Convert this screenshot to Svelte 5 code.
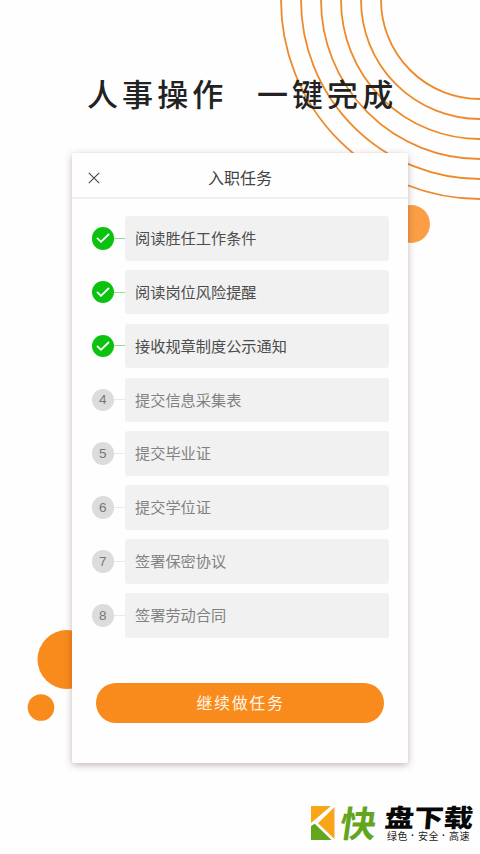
<script>
  const rings = [99, 119, 139, 159, 179, 199];
  const tasks = [
    { label: '阅读胜任工作条件', done: true },
    { label: '阅读岗位风险提醒', done: true },
    { label: '接收规章制度公示通知', done: true },
    { label: '提交信息采集表', done: false },
    { label: '提交毕业证', done: false },
    { label: '提交学位证', done: false },
    { label: '签署保密协议', done: false },
    { label: '签署劳动合同', done: false }
  ];
</script>

<main>
  <svg class="backdrop" width="480" height="854" viewBox="0 0 480 854" aria-hidden="true">
    {#each rings as r}
      <circle cx="480" cy="0" {r} fill="none" stroke="#ee8a2b" stroke-width="1.8" />
    {/each}
    <circle cx="411" cy="224" r="19" fill="#fb9e45" />
    <circle cx="67" cy="659.5" r="29.5" fill="#f98b1c" />
    <circle cx="41" cy="707.5" r="13.3" fill="#f98b1c" />
  </svg>

  <h1><span>人事操作</span><span>一键完成</span></h1>

  <section class="card">
    <header>
      <svg class="close" width="12" height="12" viewBox="0 0 12 12" aria-label="关闭">
        <path d="M.8 .8L11.2 11.2M11.2 .8L.8 11.2" stroke="#444" stroke-width="1.1" fill="none" />
      </svg>
      <h2>入职任务</h2>
    </header>

    <ol>
      {#each tasks as task, i}
        <li class:done={task.done}>
          <span class="badge">
            {#if task.done}
              <svg width="14" height="12" viewBox="0 0 14 12"><path d="M1 5.9L5 9.8L13 2" fill="none" stroke="#fff" stroke-width="1.8" /></svg>
            {:else}{i + 1}{/if}
          </span>
          <span class="link"></span>
          <span class="label">{task.label}</span>
        </li>
      {/each}
    </ol>

    <button>继续做任务</button>
  </section>

  <footer>
    <svg width="24" height="35" viewBox="0 0 24 35" aria-hidden="true">
      <path d="M0 0H20L0 17Z" fill="#f9a51a" />
      <path d="M23.5 1V33L7 17.2Z" fill="#f9a51a" />
      <path d="M0 20L3.8 17.8L20.5 34H0Z" fill="#63a51d" />
    </svg>
    <span class="fast">快</span>
    <div class="brand">
      <strong>盘下载</strong>
      <small><span>绿色</span><i>·</i><span>安全</span><i>·</i><span>高速</span></small>
    </div>
  </footer>
</main>

<style>
  :global(body) { background: #fefefe; }
  main {
    position: relative;
    box-sizing: border-box;
    width: 480px;
    height: 854px;
    overflow: hidden;
    display: flex;
    flex-direction: column;
    background: #fefefe;
    font-family: "Noto Sans CJK SC", sans-serif;
  }
  .backdrop { position: absolute; inset: 0; }
  h1 {
    position: relative;
    height: 47px;
    margin: 69px 0 37px 87px;
    display: flex;
    gap: 29.5px;
    font-size: 31px;
    line-height: 47px;
    font-weight: 500;
    letter-spacing: 4.1px;
    color: #222;
    white-space: nowrap;
  }
  .card {
    position: relative;
    flex: none;
    box-sizing: border-box;
    width: 336px;
    height: 610px;
    margin-left: 72px;
    background: #fefefe;
    border-radius: 2px;
    box-shadow: 0 2px 7px rgba(90, 35, 35, .34);
    display: flex;
    flex-direction: column;
  }
  header {
    box-sizing: border-box;
    height: 46px;
    border-bottom: 2px solid #eceeef;
    display: flex;
    align-items: center;
    padding: 5px 0 0 15.5px;
  }
  h2 {
    margin: 0 0 2px 108.5px;
    font-size: 16px;
    line-height: 24px;
    font-weight: 400;
    color: #444;
  }
  ol {
    list-style: none;
    margin: 0;
    padding: 17px 19px 0 19.5px;
    display: flex;
    flex-direction: column;
    gap: 9.36px;
  }
  li {
    display: flex;
    align-items: center;
    height: 44.5px;
    color: #818181;
  }
  .badge {
    width: 22.5px;
    height: 22.5px;
    border-radius: 50%;
    background: #dcdcdc;
    display: flex;
    align-items: center;
    justify-content: center;
    font: 13.5px "Liberation Sans", sans-serif;
    color: #777;
  }
  .link { width: 11px; height: 1px; background: #e9e9e9; }
  .label {
    flex: 1;
    height: 100%;
    box-sizing: border-box;
    padding-left: 10px;
    border-radius: 3px;
    background: #f1f1f1;
    font-size: 15.2px;
    line-height: 42.5px;
  }
  .done { color: #4c4c4c; }
  .done .badge { background: #0bc20f; }
  .done .link { background: #94df95; }
  button {
    width: 288px;
    height: 40.5px;
    margin: 45px 0 0 24px;
    padding: 0 0 2px 1px;
    border: 0;
    border-radius: 21px;
    background: #f98b1c;
    color: #fff5e8;
    font: 16px/38px "Noto Sans CJK SC", sans-serif;
    letter-spacing: 1.6px;
  }
  footer {
    position: relative;
    display: flex;
    margin: 43px 0 0 311px;
    height: 40px;
  }
  footer > svg { flex: none; }
  .fast {
    width: 37px;
    margin-left: 5px;
    font-size: 36px;
    line-height: 30px;
    font-weight: 700;
    color: #63a51d;
    transform: skewX(-8deg);
  }
  .brand { display: flex; flex-direction: column; margin-left: 8px; white-space: nowrap; }
  strong {
    width: 75px;
    font-size: 25px;
    line-height: 20px;
    font-weight: 900;
    color: #080808;
    transform: scaleX(1.18) skewX(-4deg);
    transform-origin: left;
  }
  small {
    display: flex;
    justify-content: space-between;
    width: 83px;
    margin: 4px 0 0 2px;
    font-size: 10px;
    line-height: 12px;
    letter-spacing: .5px;
    color: #222;
  }
  small i { font-family: "Liberation Sans", sans-serif; font-style: normal; font-weight: 700; }
</style>
